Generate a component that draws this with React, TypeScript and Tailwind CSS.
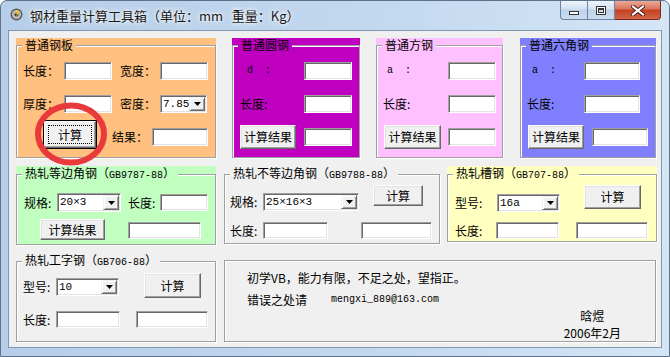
import type { ReactNode } from "react";

const MONO = "font-['Liberation_Mono',monospace] text-[10px]";

function TextBox({ cls }: { cls: string }) {
  return (
    <div
      className={`shrink-0 bg-white border border-t-[#a0a0a0] border-l-[#a0a0a0] border-b-white border-r-white shadow-[inset_1px_1px_0_#696969,inset_-1px_-1px_0_#e3e3e3] ${cls}`}
    />
  );
}

function Btn({ cls, children, focus }: { cls: string; children: ReactNode; focus?: boolean }) {
  if (focus) {
    return (
      <div className={`shrink-0 border border-black bg-[#f0f0f0] p-0 ${cls}`}>
        <div className="w-full h-full flex items-center justify-center border border-t-white border-l-white border-b-[#696969] border-r-[#696969] shadow-[inset_-1px_-1px_0_#a0a0a0]">
          <div className="w-[44px] h-[19px] flex items-center justify-center border border-dotted border-black">
            {children}
          </div>
        </div>
      </div>
    );
  }
  return (
    <div
      className={`shrink-0 flex items-center justify-center bg-[#f0f0f0] border border-t-white border-l-white border-b-[#696969] border-r-[#696969] shadow-[inset_-1px_-1px_0_#a0a0a0,inset_1px_1px_0_#e3e3e3] ${cls}`}
    >
      {children}
    </div>
  );
}

function Combo({ cls, value }: { cls: string; value: string }) {
  return (
    <div
      className={`shrink-0 flex bg-white border border-t-[#a0a0a0] border-l-[#a0a0a0] border-b-white border-r-white shadow-[inset_1px_1px_0_#696969,inset_-1px_-1px_0_#e3e3e3] p-[1px] ${cls}`}
    >
      <div className="flex-1 flex items-center pl-[1px] font-['Liberation_Mono','Noto_Sans_CJK_SC',monospace] text-[11px] leading-none whitespace-pre">
        {value}
      </div>
      <div className="w-[16px] h-full flex items-center justify-center bg-[#f0f0f0] border border-t-[#f0f0f0] border-l-[#f0f0f0] border-b-[#696969] border-r-[#696969] shadow-[inset_1px_1px_0_#fff,inset_-1px_-1px_0_#a0a0a0]">
        <svg width="7" height="4" viewBox="0 0 7 4">
          <path d="M0 0h7L3.5 4z" fill="#000" />
        </svg>
      </div>
    </div>
  );
}

function Panel({
  cls,
  bg,
  title,
  children,
}: {
  cls: string;
  bg: string;
  title: ReactNode;
  children: ReactNode;
}) {
  return (
    <div className={`relative shrink-0 ${bg} ${cls}`}>
      <fieldset className="h-full border border-[#a0a0a0] shadow-[inset_1px_1px_0_#fff,1px_1px_0_#fff]">
        <legend className={`ml-[5px] px-[3px] leading-[14px] ${bg}`}>{title}</legend>
        {children}
      </fieldset>
    </div>
  );
}

export default function App() {
  return (
    <div className="w-[670px] h-[357px] bg-white font-['Noto_Sans_CJK_SC','Noto_Sans',sans-serif] text-[12px] leading-[14px] text-black">
      <div className="w-full h-full rounded-t-[7px] border border-[#5d718a] bg-[linear-gradient(90deg,#b6cee8,#c2d8ef_55%,#d4e6f6)] flex flex-col">
        {/* title bar */}
        <div className="h-[29px] flex items-start">
          <div className="mt-[7px] ml-[9px] w-[13px] h-[13px]">
            <svg width="13" height="13" viewBox="0 0 13 13">
              <circle cx="6.5" cy="6.5" r="6" fill="#5a5a5a" />
              <circle cx="6.5" cy="6.5" r="4.6" fill="#b8b8b8" />
              <circle cx="6.5" cy="6.5" r="2" fill="#3c3c3c" />
              <path d="M6 2l2.5 0-1 2.5 2 0-3.5 4 1-3-2 0z" fill="#f2c230" />
            </svg>
          </div>
          <div className="ml-[7px] mt-[7px] text-[13px] leading-[16px] text-[#1a1a1a] whitespace-pre [text-shadow:0_0_6px_#fff,0_0_3px_#fff]">
            钢材重量计算工具箱（单位：mm   重量：Kg）
          </div>
          <div className="ml-auto mr-[8px] flex h-[19px]">
            <div className="w-[28px] h-full rounded-bl-[4px] border border-t-0 border-[#6a84a5] bg-[linear-gradient(180deg,#eef4fb,#d3e1f1_45%,#bfd2e8_50%,#cadcef)] flex items-end justify-center pb-[4px]">
              <div className="w-[10px] h-[4px] bg-white border border-[#333]" />
            </div>
            <div className="w-[27px] h-full border border-t-0 border-l-0 border-[#6a84a5] bg-[linear-gradient(180deg,#eef4fb,#d3e1f1_45%,#bfd2e8_50%,#cadcef)] flex items-center justify-center">
              <div className="w-[10px] h-[9px] border border-[#333] bg-white p-[1px]">
                <div className="w-full h-full border border-[#333] border-t-2 bg-[#cfdcec]" />
              </div>
            </div>
            <div className="w-[46px] h-full rounded-br-[4px] border border-t-0 border-l-0 border-[#7a2a1c] bg-[linear-gradient(180deg,#eba897,#d8735c_45%,#c4401f_50%,#d2654a)] flex items-center justify-center">
              <svg width="14" height="11" viewBox="0 0 14 11">
                <path
                  d="M2 1.5l10 8M12 1.5l-10 8"
                  stroke="#4a1a10"
                  strokeWidth="4"
                  strokeLinecap="square"
                />
                <path d="M2 1.5l10 8M12 1.5l-10 8" stroke="#fff" strokeWidth="2.2" strokeLinecap="square" />
              </svg>
            </div>
          </div>
        </div>

        {/* client area */}
        <div className="ml-[7px] w-[654px] h-[318px] border border-[#8196b0] bg-[#f0f0f0] pl-[7px] pt-[7px]">
          {/* row 1 */}
          <div className="flex items-start">
            <Panel cls="w-[200px] h-[120px]" bg="bg-[#ffc080]" title="普通钢板">
              <div className="flex items-center h-[18px] mt-[10px]">
                <span className="ml-[6px] w-[41px]">长度：</span>
                <TextBox cls="w-[48px] h-[18px]" />
                <span className="ml-[8px] w-[40px]">宽度：</span>
                <TextBox cls="w-[48px] h-[18px]" />
              </div>
              <div className="flex items-center h-[18px] mt-[15px]">
                <span className="ml-[6px] w-[41px]">厚度：</span>
                <TextBox cls="w-[48px] h-[18px]" />
                <span className="ml-[8px] w-[40px]">密度：</span>
                <Combo cls="w-[47px] h-[18px]" value="7.85" />
              </div>
              <div className="flex items-start h-[29px] mt-[7px]">
                <Btn cls="ml-[26px] w-[54px] h-[29px]" focus>
                  计算
                </Btn>
                <span className="ml-[15px] w-[40px] mt-[8px] leading-[18px]">结果：</span>
                <TextBox cls="w-[56px] h-[18px] mt-[8px]" />
              </div>
              <svg
                className="absolute left-[16px] top-[62px] z-10"
                width="78"
                height="68"
                viewBox="0 0 78 68"
              >
                <ellipse cx="39" cy="34" rx="33" ry="28.5" fill="none" stroke="#e8393b" strokeWidth="6" />
              </svg>
            </Panel>

            <Panel cls="ml-[16px] w-[128px] h-[120px]" bg="bg-[#c000c0]" title="普通圆钢">
              <div className="flex items-center h-[18px] mt-[10px]">
                <span className={`ml-[14px] w-[57px] whitespace-pre ${MONO}`}>d  :</span>
                <TextBox cls="w-[48px] h-[18px]" />
              </div>
              <div className="flex items-center h-[18px] mt-[15px]">
                <span className="ml-[7px] w-[64px]">长度:</span>
                <TextBox cls="w-[48px] h-[18px]" />
              </div>
              <div className="flex items-start h-[24px] mt-[12px]">
                <Btn cls="ml-[7px] w-[56px] h-[24px]">计算结果</Btn>
                <TextBox cls="ml-[8px] mt-[3px] w-[48px] h-[18px]" />
              </div>
            </Panel>

            <Panel cls="ml-[16px] w-[127px] h-[120px]" bg="bg-[#ffc0ff]" title="普通方钢">
              <div className="flex items-center h-[18px] mt-[10px]">
                <span className={`ml-[10px] w-[61px] whitespace-pre ${MONO}`}>a  :</span>
                <TextBox cls="w-[48px] h-[18px]" />
              </div>
              <div className="flex items-center h-[18px] mt-[15px]">
                <span className="ml-[6px] w-[65px]">长度:</span>
                <TextBox cls="w-[48px] h-[18px]" />
              </div>
              <div className="flex items-start h-[24px] mt-[12px]">
                <Btn cls="ml-[7px] w-[57px] h-[24px]">计算结果</Btn>
                <TextBox cls="ml-[7px] mt-[3px] w-[48px] h-[18px]" />
              </div>
            </Panel>

            <Panel cls="ml-[17px] w-[136px] h-[120px]" bg="bg-[#8080ff]" title="普通六角钢">
              <div className="flex items-center h-[18px] mt-[10px]">
                <span className={`ml-[11px] w-[52px] whitespace-pre ${MONO}`}>a  :</span>
                <TextBox cls="w-[56px] h-[18px]" />
              </div>
              <div className="flex items-center h-[18px] mt-[15px]">
                <span className="ml-[6px] w-[57px]">长度:</span>
                <TextBox cls="w-[56px] h-[18px]" />
              </div>
              <div className="flex items-start h-[24px] mt-[12px]">
                <Btn cls="ml-[7px] w-[56px] h-[24px]">计算结果</Btn>
                <TextBox cls="ml-[8px] mt-[3px] w-[56px] h-[18px]" />
              </div>
            </Panel>
          </div>

          {/* row 2 */}
          <div className="flex items-start mt-[8px]">
            <Panel
              cls="w-[200px] h-[79px]"
              bg="bg-[#c0ffc0]"
              title={
                <>
                  热轧等边角钢（<span className={MONO}>GB9787-88</span>）
                </>
              }
            >
              <div className="flex items-center h-[19px] mt-[10px]">
                <span className="ml-[7px] w-[33px]">规格:</span>
                <Combo cls="w-[64px] h-[19px]" value="20×3" />
                <span className="ml-[7px] w-[32px]">长度:</span>
                <TextBox cls="w-[48px] h-[17px]" />
              </div>
              <div className="flex items-start h-[21px] mt-[7px]">
                <Btn cls="ml-[23px] w-[65px] h-[21px]">计算结果</Btn>
                <TextBox cls="ml-[23px] mt-[3px] w-[73px] h-[17px]" />
              </div>
            </Panel>

            <Panel
              cls="ml-[8px] w-[216px] h-[78px]"
              bg="bg-[#f0f0f0]"
              title={
                <>
                  热轧不等边角钢（<span className={MONO}>GB9788-88</span>）
                </>
              }
            >
              <div className="flex items-start h-[26px] mt-[2px]">
                <span className="ml-[5px] w-[33px] mt-[8px] leading-[18px]">规格:</span>
                <Combo cls="mt-[8px] w-[96px] h-[18px]" value="25×16×3" />
                <Btn cls="ml-[14px] w-[50px] h-[21px]">计算</Btn>
              </div>
              <div className="flex items-center h-[17px] mt-[11px]">
                <span className="ml-[5px] w-[33px]">长度:</span>
                <TextBox cls="w-[65px] h-[17px]" />
                <TextBox cls="ml-[33px] w-[71px] h-[17px]" />
              </div>
            </Panel>

            <Panel
              cls="ml-[7px] w-[210px] h-[76px]"
              bg="bg-[#ffffc0]"
              title={
                <>
                  热轧槽钢（<span className={MONO}>GB707-88</span>）
                </>
              }
            >
              <div className="flex items-start h-[27px] mt-[2px]">
                <span className="ml-[7px] w-[42px] mt-[9px] leading-[18px]">型号:</span>
                <Combo cls="mt-[9px] w-[63px] h-[18px]" value="16a" />
                <Btn cls="ml-[24px] w-[57px] h-[24px]">计算</Btn>
              </div>
              <div className="flex items-center h-[17px] mt-[10px]">
                <span className="ml-[7px] w-[41px]">长度:</span>
                <TextBox cls="w-[63px] h-[17px]" />
                <TextBox cls="ml-[17px] w-[72px] h-[17px]" />
              </div>
            </Panel>
          </div>

          {/* row 3 */}
          <div className="flex items-start mt-[8px]">
            <Panel
              cls="w-[200px] h-[89px]"
              bg="bg-[#f0f0f0]"
              title={
                <>
                  热轧工字钢（<span className={MONO}>GB706-88</span>）
                </>
              }
            >
              <div className="flex items-start h-[25px] mt-[3px]">
                <span className="ml-[6px] w-[33px] mt-[5px] leading-[18px]">型号:</span>
                <Combo cls="mt-[5px] w-[63px] h-[18px]" value="10" />
                <Btn cls="ml-[25px] w-[57px] h-[25px]">计算</Btn>
              </div>
              <div className="flex items-center h-[17px] mt-[13px]">
                <span className="ml-[6px] w-[33px]">长度:</span>
                <TextBox cls="w-[64px] h-[17px]" />
                <TextBox cls="ml-[16px] w-[72px] h-[17px]" />
              </div>
            </Panel>

            <div className="ml-[8px] mt-[7px] w-[432px] h-[82px] flex flex-col border border-[#a0a0a0] shadow-[inset_1px_1px_0_#fff,1px_1px_0_#fff]">
              <div className="mt-[10px] pl-[22px]">初学VB，能力有限，不足之处，望指正。</div>
              <div className="mt-[8px] pl-[22px] flex items-center">
                <span>错误之处请</span>
                <span className={`ml-[24px] ${MONO}`}>mengxi_889@163.com</span>
              </div>
              <div className="mt-[2px] self-end mr-[34px] flex flex-col items-center">
                <span>晗煜</span>
                <span className="mt-[3px]">2006年2月</span>
              </div>
            </div>
          </div>
        </div>
      </div>
    </div>
  );
}
